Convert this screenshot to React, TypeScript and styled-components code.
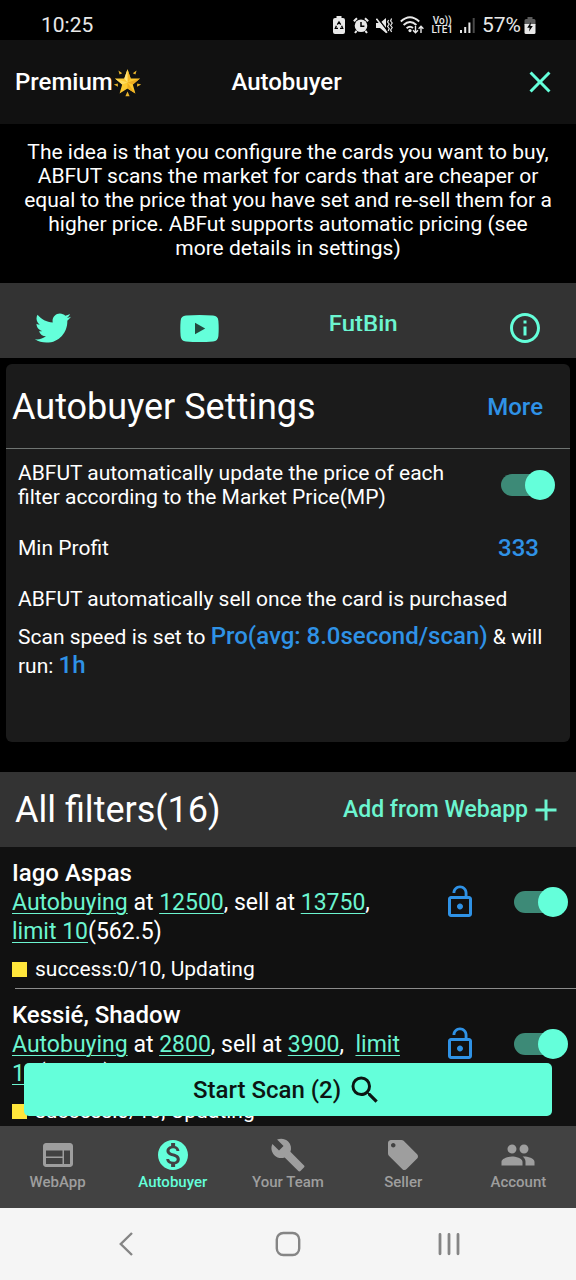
import React, { useState } from "react";
import styled, { createGlobalStyle } from "styled-components";
import {
  MdAdd,
  MdBuild,
  MdClose,
  MdInfoOutline,
  MdLocalOffer,
  MdLockOpen,
  MdMonetizationOn,
  MdPeople,
  MdSearch,
  MdWeb,
} from "react-icons/md";
import { FaTwitter } from "react-icons/fa";

const palette = {
  accent: "#64ffda",
  accent_text: "#6cf5d0",
  accent_track: "#3d8a77",
  blue: "#2f92e6",
  yellow: "#ffe63b",
  black: "#000000",
  gray_11: "#111111",
  gray_1b: "#1b1b1b",
  gray_33: "#333333",
  gray_42: "#424242",
  gray_9e: "#9e9e9e",
  gray_f5: "#f5f5f5",
};

const GlobalStyle = createGlobalStyle`
  * {
    box-sizing: border-box;
  }
  body {
    margin: 0;
    background-color: ${palette.black};
    color: white;
    font-family: Roboto, "Liberation Sans", sans-serif;
  }
  button {
    padding: 0;
    border: 0;
    background: none;
    color: inherit;
    font: inherit;
    cursor: pointer;
  }
  h1, h2, h3, p, ul {
    margin: 0;
    padding: 0;
    font-weight: 400;
  }
  svg {
    display: block;
    flex-shrink: 0;
  }
`;

const Container = styled.div`
  display: flex;
  flex-direction: column;
  height: 100vh;
  overflow: hidden;
`;

const StatusBar = styled.div`
  display: flex;
  align-items: center;
  justify-content: space-between;
  height: 40px;
  padding: 10px 40px 0 41px;
  color: #e8e8e8;
  font-size: 21px;
  line-height: 30px;
  flex-shrink: 0;

  .status-icons {
    display: flex;
    align-items: center;
    gap: 7px;
  }

  .status-battery {
    display: flex;
    align-items: center;
    gap: 3px;
  }
`;

const VolteBadge = styled.span`
  display: flex;
  flex-direction: column;
  align-items: center;
  font-size: 10px;
  font-weight: 500;
  line-height: 9px;
`;

const AppBar = styled.header`
  display: grid;
  grid-template-columns: 1fr auto 1fr;
  align-items: center;
  height: 84px;
  padding: 0 18px 0 15px;
  background-color: ${palette.gray_11};
  font-size: 24px;
  font-weight: 500;
  flex-shrink: 0;

  .premium {
    display: flex;
    align-items: center;
  }

  h1 {
    font-size: 24px;
    font-weight: 500;
  }

  .close-button {
    justify-self: end;
    color: ${palette.accent};
  }
`;

const Intro = styled.p`
  padding: 16px 24px 23px;
  font-size: 21px;
  line-height: 24px;
  text-align: center;
`;

const SocialBar = styled.nav`
  display: flex;
  justify-content: space-between;
  align-items: flex-start;
  padding: 27px 33px 12px 35px;
  background-color: ${palette.gray_33};

  a {
    display: flex;
    align-items: center;
    height: 36px;
    color: ${palette.accent};
  }

  a.text-link {
    display: block;
    height: 21px;
    overflow: hidden;
    color: ${palette.accent_text};
    font-size: 24px;
    font-weight: 500;
    line-height: 28px;
    text-decoration: none;
  }
`;

const SettingsCard = styled.section`
  margin: 6px 6px 30px;
  padding-bottom: 61px;
  border-radius: 6px;
  background-color: ${palette.gray_1b};
`;

const SettingsHeader = styled.div`
  display: flex;
  align-items: center;
  justify-content: space-between;
  height: 85px;
  padding: 2px 27px 0 6px;
  border-bottom: 1px solid #6f7472;
`;

const SectionTitle = styled.h2`
  font-size: 36px;
  line-height: 42px;
`;

const BlueButton = styled.button`
  color: ${palette.blue};
  font-size: 24px;
  font-weight: 500;
  line-height: 24px;
`;

const SettingRow = styled.div<{ $height: number; $right?: number }>`
  display: flex;
  align-items: center;
  justify-content: space-between;
  min-height: ${({ $height }) => $height}px;
  padding: 0 ${({ $right = 12 }) => $right}px 0 12px;
  font-size: 21px;
  line-height: 24px;

  label {
    max-width: 440px;
  }
`;

const ScanSpeed = styled.p`
  padding: 0 12px;
  font-size: 21px;
  line-height: 29px;
`;

const Switch = styled.input`
  appearance: none;
  position: relative;
  width: 54px;
  height: 30px;
  margin: 0;
  flex-shrink: 0;
  cursor: pointer;

  &::before {
    content: "";
    position: absolute;
    top: 4px;
    left: 0;
    width: 50px;
    height: 22px;
    border-radius: 11px;
    background-color: #5a5a5a;
  }

  &::after {
    content: "";
    position: absolute;
    top: 0;
    left: 0;
    width: 30px;
    height: 30px;
    border-radius: 50%;
    background-color: #bdbdbd;
  }

  &:checked::before {
    background-color: ${palette.accent_track};
  }

  &:checked::after {
    left: auto;
    right: 0;
    background-color: ${palette.accent};
  }
`;

const FiltersHeader = styled.div`
  display: flex;
  align-items: center;
  justify-content: space-between;
  height: 75px;
  padding: 0 12px 0 15px;
  background-color: ${palette.gray_33};
  flex-shrink: 0;

  button {
    display: flex;
    align-items: center;
    color: ${palette.accent_text};
    font-size: 23px;
    font-weight: 500;
  }
`;

const FilterArea = styled.section`
  position: relative;
  flex: 1;
  min-height: 0;
  overflow: hidden;
  background-color: ${palette.gray_11};
`;

const FilterList = styled.ul`
  height: 100%;
  overflow: hidden;
  list-style: none;
`;

const FilterItem = styled.li`
  padding-top: 12px;

  .filter-row {
    display: flex;
    padding: 0 8px 0 12px;
  }

  .filter-body {
    flex: 1;
    max-width: 396px;
    margin-right: auto;
    font-size: 23px;
    line-height: 29px;
  }

  h3 {
    font-size: 24px;
    font-weight: 500;
  }

  a {
    color: ${palette.accent_text};
    text-decoration-thickness: 1px;
    text-underline-offset: 3px;
  }

  .filter-status {
    display: flex;
    align-items: center;
    gap: 8px;
    margin-top: 11px;
    font-size: 21px;
    line-height: 24px;
  }

  .filter-status::before {
    content: "";
    width: 15px;
    height: 15px;
    background-color: ${palette.yellow};
  }

  .filter-actions {
    display: flex;
    align-items: center;
    gap: 36px;
    height: 85px;
  }

  .lock-button {
    color: ${palette.blue};
  }

  &::after {
    content: "";
    display: block;
    height: 1px;
    margin: 7px 0 0 15px;
    background-color: #8c8c8c;
  }
`;

const ScanButton = styled.button`
  position: absolute;
  right: 24px;
  bottom: 10px;
  left: 24px;
  display: flex;
  align-items: center;
  justify-content: center;
  gap: 6px;
  height: 53px;
  border-radius: 5px;
  background-color: ${palette.accent};
  color: #0c1512;
  font-size: 24px;
  font-weight: 500;
`;

const TabBar = styled.nav`
  display: flex;
  height: 82px;
  padding-top: 11px;
  background-color: ${palette.gray_42};
  flex-shrink: 0;
`;

const Tab = styled.button<{ $active?: boolean }>`
  display: flex;
  flex: 1;
  flex-direction: column;
  align-items: center;
  height: 55px;
  color: ${({ $active }) => ($active ? palette.accent : palette.gray_9e)};
  font-size: 15px;
  font-weight: 500;
  line-height: 19px;
`;

const SystemBar = styled.div`
  display: grid;
  grid-template-columns: repeat(3, 1fr);
  align-items: center;
  justify-items: center;
  height: 72px;
  padding: 0 45px;
  background-color: ${palette.gray_f5};
  color: #858585;
  flex-shrink: 0;
`;

const StarIcon: React.FC = () => (
  <svg width="29" height="29" viewBox="0 0 29 29" aria-hidden="true">
    <g fill="#e9b52c">
      <path d="M5.4 2.6 9.2 5.2 6.6 6.6z" />
      <path d="M23.6 2.6 19.8 5.2 22.4 6.6z" />
      <path d="M.8 16.4 4.8 15.6 5 18.8z" />
      <path d="M28.2 16.4 24.2 15.6 24 18.8z" />
      <path d="M14.5 23.6 16.6 28.2H12.4z" />
    </g>
    <path
      d="M14.5 1.2 17.7 10.4 27 10.6 19.8 16.6 22.4 25.4 14.5 20.4 6.6 25.4 9.2 16.6 2 10.6 11.3 10.4z"
      fill="#fdc92f"
    />
    <path d="M14.5 1.2 17.7 10.4 14.5 14.6z" fill="#f3b526" />
    <path d="M14.5 14.6 27 10.6 19.8 16.6z" fill="#eeac22" />
    <path d="M14.5 14.6 22.4 25.4 14.5 20.4z" fill="#f0ae20" />
    <path d="M14.5 14.6 9.2 16.6 2 10.6z" fill="#ffdb5e" />
    <path d="M14.5 1.2 11.3 10.4 14.5 14.6z" fill="#ffe47a" />
  </svg>
);

const YoutubeIcon: React.FC = () => (
  <svg width="39" height="27" viewBox="0 0 39 27" aria-hidden="true">
    <path
      d="M6 .6Q19.5-.4 33 .6 38 .8 38.4 6 39 13.5 38.4 21 38 26.2 33 26.4 19.5 27.4 6 26.4 1 26.2.6 21 0 13.5.6 6 1 .8 6 .6z"
      fill="currentColor"
    />
    <path d="M15 7.7 25.2 13.5 15 19.2z" fill="#23483f" />
  </svg>
);

const BatterySaverIcon: React.FC = () => (
  <svg width="14" height="18" viewBox="0 0 14 18" aria-hidden="true">
    <path d="M4.5 0h5v2H11a2 2 0 0 1 2 2v12a2 2 0 0 1-2 2H3a2 2 0 0 1-2-2V4a2 2 0 0 1 2-2h1.500z" fill="currentColor" />
    <path d="M5.3 8.6 7 5.9l1.7 2.7M9.6 9.8l1.1 2.6H8M6 12.4H3.3l1.1-2.6" fill="none" stroke="#000" strokeWidth="1.3" />
  </svg>
);

const AlarmIcon: React.FC = () => (
  <svg width="16" height="17" viewBox="0 0 16 17" aria-hidden="true">
    <circle cx="8" cy="8.8" r="6.3" fill="currentColor" />
    <path d="M.8 4.2 4 1.2M15.2 4.2 12 1.2M3.6 13.8 2 16M12.4 13.8 14 16" stroke="currentColor" strokeWidth="2" />
    <path d="M8 5v4.2h3.4" fill="none" stroke="#000" strokeWidth="1.5" />
  </svg>
);

const MuteIcon: React.FC = () => (
  <svg width="17" height="17" viewBox="0 0 17 17" aria-hidden="true">
    <path d="M0 6h4l6-5v15l-6-5H0z" fill="currentColor" />
    <path d="M1.6 1 12 14.5" stroke="#000" strokeWidth="1.4" />
    <path d="M.4 1.8 11 15.8" stroke="currentColor" strokeWidth="1.6" />
    <path
      d="m12.6 3-1 2 1.6 2-1.6 2.500 1.600 2-1 2.500M15.600 1.500l-1 2.500 1.600 2-1.600 2.500 1.600 2-1.600 2.500 1 2"
      fill="none"
      stroke="currentColor"
      strokeWidth="1.2"
    />
  </svg>
);

const WifiIcon: React.FC = () => (
  <svg width="24" height="18" viewBox="0 0 24 18" aria-hidden="true">
    <path d="M.8 5.5Q10-3 19.2 5.5M3.6 9Q10 3 16.4 9M6.6 12.2Q10 9.2 13 12" fill="none" stroke="currentColor" strokeWidth="1.9" />
    <circle cx="10" cy="14.6" r="1.6" fill="currentColor" />
    <path
      d="M15.5 10v6.5M13 14.2l2.5 2.5 2.5-2.5M21 17v-6.5M18.6 12.8l2.4-2.5 2.4 2.5"
      fill="none"
      stroke="currentColor"
      strokeWidth="1.4"
    />
  </svg>
);

const SignalIcon: React.FC = () => (
  <svg width="15" height="16" viewBox="0 0 15 16" aria-hidden="true">
    <path d="M1 13v3M5.2 10v6M9.4 5.5V16" stroke="currentColor" strokeWidth="2" />
    <path d="M13.7 1v15" stroke="#4a4a4a" strokeWidth="2" />
  </svg>
);

const ChargingIcon: React.FC = () => (
  <svg width="12" height="17" viewBox="0 0 12 17" aria-hidden="true">
    <path d="M3.5 0h5v2H10a1.5 1.5 0 0 1 1.5 1.5V8H.5V3.5A1.5 1.5 0 0 1 2 2h1.500z" fill="#5c5c5c" />
    <path d="M.5 7h11v8.5A1.5 1.5 0 0 1 10 17H2a1.5 1.5 0 0 1-1.5-1.5z" fill="currentColor" />
    <path d="M7 5 3.2 10.800h2.500L5 14.600l3.800-5.600H6.400z" fill="#000" />
  </svg>
);

const tabs = [
  { label: "WebApp", Icon: MdWeb },
  { label: "Autobuyer", Icon: MdMonetizationOn },
  { label: "Your Team", Icon: MdBuild },
  { label: "Seller", Icon: MdLocalOffer },
  { label: "Account", Icon: MdPeople },
];

const filters = [
  { name: "Iago Aspas", buy: 12500, sell: 13750, gap: " ", profit: "562.5" },
  { name: "Kessié, Shadow", buy: 2800, sell: 3900, gap: " \u00a0", profit: "905.0" },
];

const App: React.FC = () => {
  const [activeTab, setActiveTab] = useState("Autobuyer");

  return (
    <Container>
      <GlobalStyle />
      <StatusBar>
        <span>10:25</span>
        <div className="status-icons">
          <BatterySaverIcon />
          <AlarmIcon />
          <MuteIcon />
          <WifiIcon />
          <VolteBadge>
            <span>Vo))</span>
            <span>LTE1</span>
          </VolteBadge>
          <SignalIcon />
          <div className="status-battery">
            <span>57%</span>
            <ChargingIcon />
          </div>
        </div>
      </StatusBar>

      <AppBar>
        <div className="premium">
          <span>Premium</span>
          <StarIcon />
        </div>
        <h1>Autobuyer</h1>
        <button type="button" className="close-button" aria-label="Close">
          <MdClose size={36} />
        </button>
      </AppBar>

      <Intro>
        The idea is that you configure the cards you want to buy, ABFUT scans the market for cards that are
        cheaper or equal to the price that you have set and re-sell them for a higher price. ABFut supports
        automatic pricing (see more details in settings)
      </Intro>

      <SocialBar>
        <a href="#twitter" aria-label="Twitter">
          <FaTwitter size={36} />
        </a>
        <a href="#youtube" aria-label="YouTube">
          <YoutubeIcon />
        </a>
        <a href="#futbin" className="text-link">
          FutBin
        </a>
        <a href="#info" aria-label="Info">
          <MdInfoOutline size={36} />
        </a>
      </SocialBar>

      <SettingsCard>
        <SettingsHeader>
          <SectionTitle>Autobuyer Settings</SectionTitle>
          <BlueButton type="button">More</BlueButton>
        </SettingsHeader>
        <SettingRow $height={72} $right={15}>
          <label htmlFor="auto-price">
            ABFUT automatically update the price of each filter according to the Market Price(MP)
          </label>
          <Switch id="auto-price" type="checkbox" defaultChecked />
        </SettingRow>
        <SettingRow $height={54} $right={31}>
          <span>Min Profit</span>
          <BlueButton type="button">333</BlueButton>
        </SettingRow>
        <SettingRow $height={48}>
          <span>ABFUT automatically sell once the card is purchased</span>
        </SettingRow>
        <ScanSpeed>
          Scan speed is set to <BlueButton type="button">Pro(avg: 8.0second/scan)</BlueButton> &amp; will run:{" "}
          <BlueButton type="button">1h</BlueButton>
        </ScanSpeed>
      </SettingsCard>

      <FiltersHeader>
        <SectionTitle>All filters(16)</SectionTitle>
        <button type="button">
          Add from Webapp
          <MdAdd size={36} />
        </button>
      </FiltersHeader>

      <FilterArea>
        <FilterList>
          {filters.map(({ name, buy, sell, gap, profit }) => (
            <FilterItem key={name}>
              <div className="filter-row">
                <div className="filter-body">
                  <h3>{name}</h3>
                  <p>
                    <a href="#autobuying">Autobuying</a> at <a href="#buy">{buy}</a>, sell at{" "}
                    <a href="#sell">{sell}</a>,{gap}
                    <a href="#limit">limit 10</a>({profit})
                  </p>
                  <div className="filter-status">success:0/10, Updating</div>
                </div>
                <div className="filter-actions">
                  <button type="button" className="lock-button" aria-label={`Lock ${name}`}>
                    <MdLockOpen size={36} />
                  </button>
                  <Switch type="checkbox" aria-label={`Enable ${name}`} defaultChecked />
                </div>
              </div>
            </FilterItem>
          ))}
        </FilterList>
        <ScanButton type="button">
          Start Scan (2)
          <MdSearch size={36} />
        </ScanButton>
      </FilterArea>

      <TabBar>
        {tabs.map(({ label, Icon }) => (
          <Tab key={label} type="button" $active={label === activeTab} onClick={() => setActiveTab(label)}>
            <Icon size={36} />
            {label}
          </Tab>
        ))}
      </TabBar>

      <SystemBar>
        <svg width="14" height="24" viewBox="0 0 14 24" fill="none" stroke="currentColor" strokeWidth="2.4">
          <path d="M13 1 1.8 12 13 23" />
        </svg>
        <svg width="26" height="26" viewBox="0 0 26 26" fill="none" stroke="currentColor" strokeWidth="2.4">
          <rect x="1.8" y="2" width="22.4" height="22" rx="6.5" />
        </svg>
        <svg width="24" height="24" viewBox="0 0 24 24" stroke="currentColor" strokeWidth="2.8" strokeLinecap="round">
          <path d="M2 2.4v19.4M11 2.4v19.4M20 2.4v19.4" />
        </svg>
      </SystemBar>
    </Container>
  );
};

export default App;
